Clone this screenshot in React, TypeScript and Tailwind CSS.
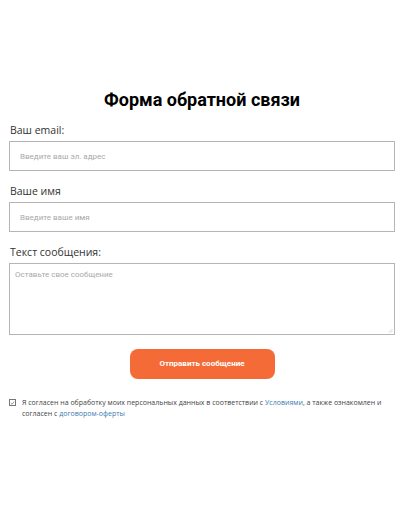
import { useState } from "react";

// feedback form with consent checkbox
export default function App() {
  const [agree, setAgree] = useState(true);

  return (
    <div className="min-h-[516px] w-full bg-white font-['Open_Sans',sans-serif] text-[#333]">
      <div className="pt-[87px] pl-[9px] w-[395px]">
        <h1 className="text-center font-['Roboto',sans-serif] font-bold text-[18px] leading-[26px] text-black">
          Форма обратной связи
        </h1>

        <form className="mt-[10px] flex flex-col">
          <label className="text-[10.5px] leading-[15px] pl-[1px]">Ваш email:</label>
          <input
            type="email"
            placeholder="Введите ваш эл. адрес"
            className="mt-[3px] h-[30px] w-full border border-[#b5b5b5] px-[10px] font-['Roboto',sans-serif] text-[8px] outline-none placeholder:text-[#a9a9a9]"
          />

          <label className="mt-[13px] text-[10.5px] leading-[15px] pl-[1px]">Ваше имя</label>
          <input
            type="text"
            placeholder="Введите ваше имя"
            className="mt-[3px] h-[30px] w-full border border-[#b5b5b5] px-[10px] font-['Roboto',sans-serif] text-[8px] outline-none placeholder:text-[#a9a9a9]"
          />

          <label className="mt-[13px] text-[10.5px] leading-[15px] pl-[1px]">Текст сообщения:</label>
          <div className="relative mt-[3px]">
            <textarea
              placeholder="Оставьте свое сообщение"
              className="block h-[72px] w-full resize-none border border-[#b5b5b5] px-[5px] py-[5px] font-['Roboto',sans-serif] text-[8px] outline-none placeholder:text-[#a9a9a9]"
            />
            {/* resize grip */}
            <svg viewBox="0 0 6 6" className="pointer-events-none absolute bottom-[2px] right-[2px] h-[5px] w-[5px]">
              <path d="M5.5 1 L1 5.5 M5.5 3.5 L3.5 5.5" stroke="#c4c4c4" strokeWidth="0.8" />
            </svg>
          </div>

          <button
            type="button"
            className="mx-auto mt-[14px] h-[30px] w-[145px] rounded-[8px] bg-[#f56b37] font-['Roboto',sans-serif] text-[8px] font-bold text-white"
          >
            Отправить сообщение
          </button>

          <div className="mt-[18px] flex items-start gap-[4px] text-[7px] leading-[11px] text-[#444]">
            <button
              type="button"
              onClick={() => setAgree(!agree)}
              className="mt-[2px] flex h-[7px] w-[7px] shrink-0 items-center justify-center border border-[#777] bg-white"
            >
              {agree && (
                <svg viewBox="0 0 8 8" className="h-[6px] w-[6px]">
                  <path d="M1.3 4.2 L3.2 6 L6.8 1.8" fill="none" stroke="#555" strokeWidth="1" />
                </svg>
              )}
            </button>
            <p className="pl-[2px]">
              Я согласен на обработку моих персональных данных в соответствии с{" "}
              <a className="text-[#3a7cb0]" href="#">Условиями</a>, а также ознакомлен и согласен с{" "}
              <a className="text-[#3a7cb0]" href="#">договором-оферты</a>
            </p>
          </div>
        </form>
      </div>
    </div>
  );
}
